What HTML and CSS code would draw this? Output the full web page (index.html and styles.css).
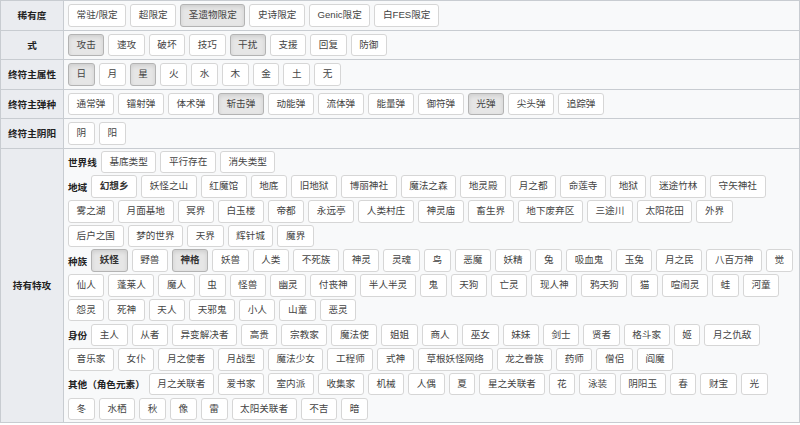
FILE: index.html
```html
<!DOCTYPE html>
<html lang="zh-CN">
<head>
<meta charset="utf-8">
<title>特性筛选</title>
<link rel="stylesheet" href="styles.css">
</head>
<body>
<div class="spec">
  <div class="th">稀有度</div>
  <div class="td">
    <span class="tag">常驻/限定</span><span class="tag">超限定</span><span class="tag on">圣遗物限定</span><span class="tag">史诗限定</span><span class="tag">Genic限定</span><span class="tag">白FES限定</span>
  </div>

  <div class="th">式</div>
  <div class="td">
    <span class="tag on">攻击</span><span class="tag">速攻</span><span class="tag">破坏</span><span class="tag">技巧</span><span class="tag on">干扰</span><span class="tag">支援</span><span class="tag">回复</span><span class="tag">防御</span>
  </div>

  <div class="th">终符主属性</div>
  <div class="td">
    <span class="tag on">日</span><span class="tag">月</span><span class="tag on">星</span><span class="tag">火</span><span class="tag">水</span><span class="tag">木</span><span class="tag">金</span><span class="tag">土</span><span class="tag">无</span>
  </div>

  <div class="th">终符主弹种</div>
  <div class="td">
    <span class="tag">通常弹</span><span class="tag">镭射弹</span><span class="tag">体术弹</span><span class="tag on">斩击弹</span><span class="tag">动能弹</span><span class="tag">流体弹</span><span class="tag">能量弹</span><span class="tag">御符弹</span><span class="tag on">光弹</span><span class="tag">尖头弹</span><span class="tag">追踪弹</span>
  </div>

  <div class="th">终符主阴阳</div>
  <div class="td">
    <span class="tag">阴</span><span class="tag">阳</span>
  </div>

  <div class="th">持有特攻</div>
  <div class="td big">
    <div class="line"><b class="lbl">世界线</b><span class="tag">基底类型</span><span class="tag">平行存在</span><span class="tag">消失类型</span></div>

    <div class="line"><b class="lbl">地域</b><span class="tag b">幻想乡</span><span class="tag">妖怪之山</span><span class="tag">红魔馆</span><span class="tag">地底</span><span class="tag">旧地狱</span><span class="tag">博丽神社</span><span class="tag">魔法之森</span><span class="tag">地灵殿</span><span class="tag">月之都</span><span class="tag">命莲寺</span><span class="tag">地狱</span><span class="tag">迷途竹林</span><span class="tag">守矢神社</span></div>
    <div class="line"><span class="tag">雾之湖</span><span class="tag">月面基地</span><span class="tag">冥界</span><span class="tag">白玉楼</span><span class="tag">帝都</span><span class="tag">永远亭</span><span class="tag">人类村庄</span><span class="tag">神灵庙</span><span class="tag">畜生界</span><span class="tag">地下废弃区</span><span class="tag">三途川</span><span class="tag">太阳花田</span><span class="tag">外界</span></div>
    <div class="line"><span class="tag">后户之国</span><span class="tag">梦的世界</span><span class="tag">天界</span><span class="tag">辉针城</span><span class="tag">魔界</span></div>

    <div class="line"><b class="lbl">种族</b><span class="tag on b">妖怪</span><span class="tag">野兽</span><span class="tag on b">神格</span><span class="tag">妖兽</span><span class="tag">人类</span><span class="tag">不死族</span><span class="tag">神灵</span><span class="tag">灵魂</span><span class="tag">鸟</span><span class="tag">恶魔</span><span class="tag">妖精</span><span class="tag">兔</span><span class="tag">吸血鬼</span><span class="tag">玉兔</span><span class="tag">月之民</span><span class="tag">八百万神</span><span class="tag">觉</span></div>
    <div class="line"><span class="tag">仙人</span><span class="tag">蓬莱人</span><span class="tag">魔人</span><span class="tag">虫</span><span class="tag">怪兽</span><span class="tag">幽灵</span><span class="tag">付丧神</span><span class="tag">半人半灵</span><span class="tag">鬼</span><span class="tag">天狗</span><span class="tag">亡灵</span><span class="tag">现人神</span><span class="tag">鸦天狗</span><span class="tag">猫</span><span class="tag">喧闹灵</span><span class="tag">蛙</span><span class="tag">河童</span></div>
    <div class="line"><span class="tag">怨灵</span><span class="tag">死神</span><span class="tag">天人</span><span class="tag">天邪鬼</span><span class="tag">小人</span><span class="tag">山童</span><span class="tag">恶灵</span></div>

    <div class="line"><b class="lbl">身份</b><span class="tag">主人</span><span class="tag">从者</span><span class="tag">异变解决者</span><span class="tag">高贵</span><span class="tag">宗教家</span><span class="tag">魔法使</span><span class="tag">姐姐</span><span class="tag">商人</span><span class="tag">巫女</span><span class="tag">妹妹</span><span class="tag">剑士</span><span class="tag">贤者</span><span class="tag">格斗家</span><span class="tag">姬</span><span class="tag">月之仇敌</span></div>
    <div class="line"><span class="tag">音乐家</span><span class="tag">女仆</span><span class="tag">月之使者</span><span class="tag">月战型</span><span class="tag">魔法少女</span><span class="tag">工程师</span><span class="tag">式神</span><span class="tag">草根妖怪网络</span><span class="tag">龙之眷族</span><span class="tag">药师</span><span class="tag">僧侣</span><span class="tag">阎魔</span></div>

    <div class="line"><b class="lbl">其他（角色元素）</b><span class="tag">月之关联者</span><span class="tag">爱书家</span><span class="tag">室内派</span><span class="tag">收集家</span><span class="tag">机械</span><span class="tag">人偶</span><span class="tag">夏</span><span class="tag">星之关联者</span><span class="tag">花</span><span class="tag">泳装</span><span class="tag">阴阳玉</span><span class="tag">春</span><span class="tag">财宝</span><span class="tag">光</span></div>
    <div class="line"><span class="tag">冬</span><span class="tag">水栖</span><span class="tag">秋</span><span class="tag">像</span><span class="tag">雷</span><span class="tag">太阳关联者</span><span class="tag">不吉</span><span class="tag">暗</span></div>
  </div>
</div>
</body>
</html>
```

FILE: styles.css
```css
* {
  box-sizing: border-box;
}

body {
  margin: 0;
  background: #ffffff;
  font-family: "Liberation Sans", "Noto Sans CJK SC", sans-serif;
  font-size: 9.6px;
  color: #333333;
}

.spec {
  display: grid;
  grid-template-columns: 63px 1fr;
  width: 800px;
  border-top: 1px solid #c8ccd1;
  border-left: 1px solid #c8ccd1;
}

.th {
  display: flex;
  align-items: center;
  justify-content: center;
  background: #eaecf0;
  color: #222222;
  font-weight: bold;
  border-right: 1px solid #c8ccd1;
  border-bottom: 1px solid #c8ccd1;
  white-space: nowrap;
}

.td {
  display: flex;
  flex-wrap: wrap;
  align-items: center;
  padding: 3px 2px;
  background: #f8f9fa;
  border-right: 1px solid #c8ccd1;
  border-bottom: 1px solid #c8ccd1;
}

.td.big {
  flex-direction: column;
  flex-wrap: nowrap;
  align-items: stretch;
  gap: 2.2px;
  padding: 2.2px 2px 1.5px;
}

.line {
  display: flex;
  align-items: center;
}

.lbl {
  flex-shrink: 0;
  margin: 0 2px;
  font-weight: bold;
  color: #222222;
  white-space: nowrap;
}

.tag {
  display: block;
  flex-shrink: 0;
  margin: 0 2px;
  padding: 3px 7.6px;
  line-height: 14.5px;
  border: 1px solid #d6d6d6;
  border-radius: 3px;
  background: #ffffff;
  color: #444444;
  white-space: nowrap;
}

.tag.on {
  background: #e6e6e6;
  border-color: #b3b3b3;
  box-shadow: inset 0 2px 4px rgba(0, 0, 0, 0.1);
}

.tag.b {
  font-weight: bold;
  color: #333333;
}
```
